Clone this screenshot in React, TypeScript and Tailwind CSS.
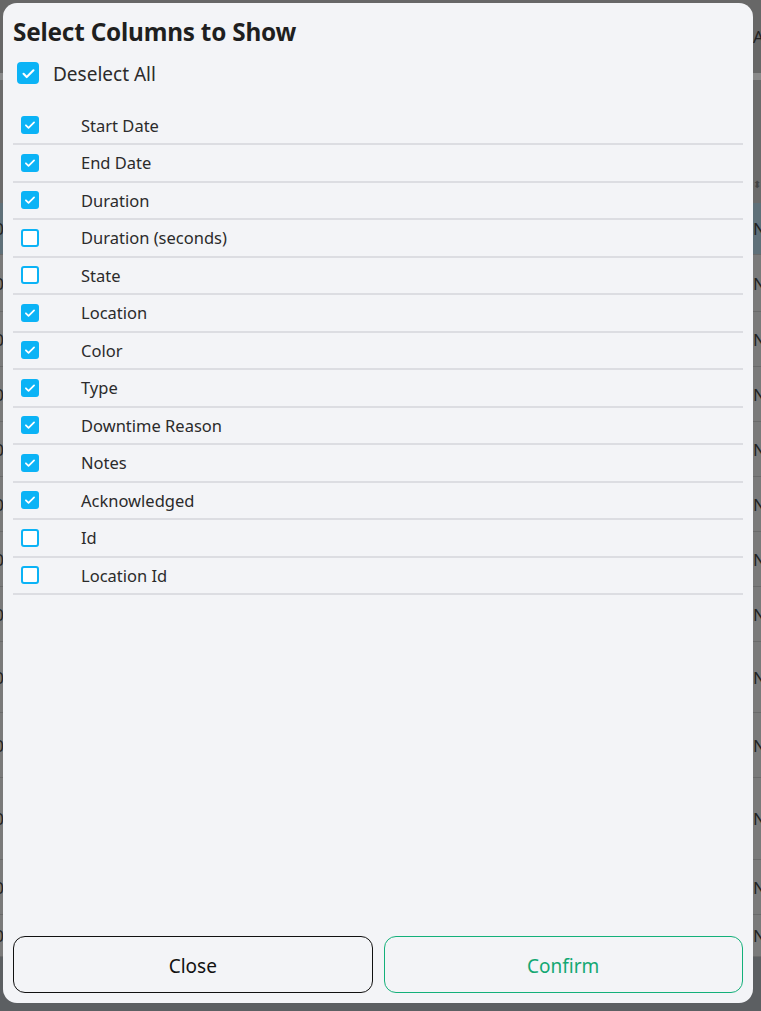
import React from 'react'

const COLUMNS = [
  { label: 'Start Date', checked: true },
  { label: 'End Date', checked: true },
  { label: 'Duration', checked: true },
  { label: 'Duration (seconds)', checked: false },
  { label: 'State', checked: false },
  { label: 'Location', checked: true },
  { label: 'Color', checked: true },
  { label: 'Type', checked: true },
  { label: 'Downtime Reason', checked: true },
  { label: 'Notes', checked: true },
  { label: 'Acknowledged', checked: true },
  { label: 'Id', checked: false },
  { label: 'Location Id', checked: false },
]

const BG_ROWS = [
  { h: 'h-[52px]', bg: 'bg-[#5f7079]' },
  { h: 'h-[57px]', bg: 'bg-[#7a7a7a]' },
  { h: 'h-[55px]', bg: 'bg-[#7a7a7a]' },
  { h: 'h-[55px]', bg: 'bg-[#7a7a7a]' },
  { h: 'h-[55px]', bg: 'bg-[#7a7a7a]' },
  { h: 'h-[55px]', bg: 'bg-[#7a7a7a]' },
  { h: 'h-[55px]', bg: 'bg-[#7a7a7a]' },
  { h: 'h-[55px]', bg: 'bg-[#7a7a7a]' },
  { h: 'h-[71px]', bg: 'bg-[#7a7a7a]' },
  { h: 'h-[65px]', bg: 'bg-[#7a7a7a]' },
  { h: 'h-[82px]', bg: 'bg-[#7a7a7a]' },
  { h: 'h-[55px]', bg: 'bg-[#7a7a7a]' },
  { h: 'h-[42px]', bg: 'bg-[#7a7a7a]' },
]

function Check({ checked, big }: { checked: boolean; big?: boolean }) {
  const size = big ? 'w-[22px] h-[22px] rounded-[4px]' : 'w-[18px] h-[18px] rounded-[3px]'
  if (!checked) {
    return <span className={`${size} shrink-0 border-2 border-[#0bb3f6] bg-white`} />
  }
  return (
    <span className={`${size} shrink-0 bg-[#0bb3f6] flex items-center justify-center`}>
      <svg viewBox="0 0 24 24" className={big ? 'w-[17px] h-[17px]' : 'w-[14px] h-[14px]'} fill="none" stroke="white" strokeWidth={3} strokeLinecap="round" strokeLinejoin="round">
        <path d="M5 12.5l4.5 4.5L19 7.5" />
      </svg>
    </span>
  )
}

export default function App() {
  return (
    <div className="relative w-[761px] h-[1011px] overflow-hidden" style={{ fontFamily: '"Noto Sans", "Open Sans", sans-serif' }}>
      {/* page behind the dialog, dimmed */}
      <div className="flex flex-col h-full bg-[#5c5f62] text-[#111] text-[17px]" aria-hidden>
        <div className="h-[73px] bg-[#676767] flex items-center justify-end">
          <span className="w-[8px] overflow-hidden text-[#222] leading-none">A</span>
        </div>
        <div className="h-[7px] bg-[#8a8a8a]" />
        <div className="h-[123px] bg-[#6b6b6b] flex items-end justify-end pb-[14px]">
          <span className="text-[#444] text-[10px] leading-none">⬍</span>
        </div>
        {BG_ROWS.map((r, i) => (
          <div key={i} className={`${r.h} ${r.bg} border-b border-[#6a6a6a] flex items-center justify-between`}>
            <span className="w-[4px] overflow-hidden text-[#222] leading-none flex justify-end">0</span>
            <span className="w-[8px] overflow-hidden text-[#222] leading-none">N</span>
          </div>
        ))}
      </div>

      {/* dialog */}
      <div className="absolute top-[3px] left-[3px] right-[8px] bottom-[8px] bg-[#f3f4f7] rounded-[14px] flex flex-col px-[10px] pb-[10px]">
        <h2 className="mt-[14px] text-[24.3px] leading-[30px] font-bold text-[#1f1f1f] tracking-[-0.2px]">Select Columns to Show</h2>
        <label className="mt-[11px] flex items-center gap-[14px] pl-[4px] h-[30px]">
          <Check checked big />
          <span className="text-[19px] text-[#2b2b2b] pt-[2px]">Deselect All</span>
        </label>
        <div className="mt-[19.5px] flex flex-col">
          {COLUMNS.map((c) => (
            <div key={c.label} className="h-[37.5px] border-b-2 border-[#dcdde2] flex items-center">
              <span className="w-[68px] pl-[8px] flex">
                <Check checked={c.checked} />
              </span>
              <span className="text-[16.5px] text-[#2b2b2b] pt-[2px]">{c.label}</span>
            </div>
          ))}
        </div>
        <div className="mt-auto flex gap-[11px]">
          <button className="flex-1 h-[57px] rounded-[12px] border border-[#111] text-[19px] text-[#111] pt-[3px]">Close</button>
          <button className="flex-1 h-[57px] rounded-[12px] border border-[#13b07a] text-[19px] text-[#13a873] pt-[3px]">Confirm</button>
        </div>
      </div>
    </div>
  )
}
